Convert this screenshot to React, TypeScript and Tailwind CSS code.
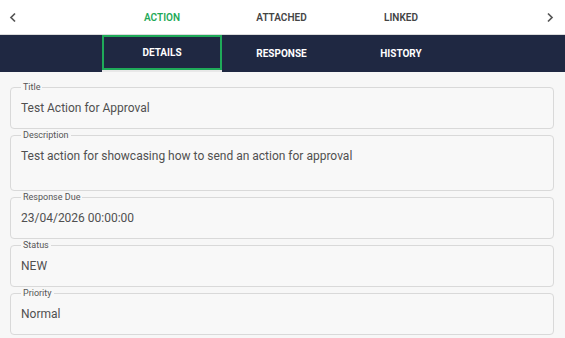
import React from "react";

function Chevron({ dir }: { dir: "left" | "right" }) {
  return (
    <svg width="8" height="11" viewBox="0 0 8 11" fill="none">
      {dir === "left" ? (
        <path d="M6 1.5 L2 5.5 L6 9.5" stroke="#555" strokeWidth="1.7" />
      ) : (
        <path d="M2 1.5 L6 5.5 L2 9.5" stroke="#555" strokeWidth="1.7" />
      )}
    </svg>
  );
}

function Field({ label, value, tall }: { label: string; value: string; tall?: boolean }) {
  return (
    <fieldset
      className={`border border-[#d9d9d9] rounded-[4px] bg-[#f8f8f8] px-[10px] ${tall ? "h-[61px]" : "h-[47px]"}`}
    >
      <legend className="px-[2px] text-[9px] leading-[11px] text-[#555]">{label}</legend>
      <div className="mt-[5px] text-[12px] leading-[20px] text-[#505050]">{value}</div>
    </fieldset>
  );
}

export default function App() {
  return (
    <div className="w-[565px] h-[338px] overflow-hidden bg-[#f7f7f7]" style={{ fontFamily: "Roboto, 'Liberation Sans', sans-serif" }}>
      <div className="h-[35px] bg-white border-b border-[#dcdcdc] flex items-center">
        <div className="w-[102px] pl-[9px] flex items-center">
          <Chevron dir="left" />
        </div>
        <div className="w-[120px] text-center text-[10px] font-semibold text-[#1faa59]">ACTION</div>
        <div className="w-[119px] text-center text-[10px] font-semibold text-[#444]">ATTACHED</div>
        <div className="w-[120px] text-center text-[10px] font-semibold text-[#444]">LINKED</div>
        <div className="flex-1 flex justify-end pr-[11px]">
          <Chevron dir="right" />
        </div>
      </div>
      <div className="h-[37px] bg-[#1f2842] flex">
        <div className="w-[102px]" />
        <div className="w-[120px] flex flex-col">
          <div className="flex-1 border-2 border-[#1faa59] flex items-center justify-center text-[10px] font-bold text-white">
            DETAILS
          </div>
          <div className="h-[2px] bg-[#e8e8e8]" />
        </div>
        <div className="w-[119px] flex items-center justify-center text-[10px] font-bold text-white">RESPONSE</div>
        <div className="w-[120px] flex items-center justify-center text-[10px] font-bold text-white">HISTORY</div>
      </div>
      <div className="pt-[10px] pl-[10px] pr-[11px] flex flex-col gap-[1px]">
        <Field label="Title" value="Test Action for Approval" />
        <Field label="Description" value="Test action for showcasing how to send an action for approval" tall />
        <Field label="Response Due" value="23/04/2026 00:00:00" />
        <Field label="Status" value="NEW" />
        <Field label="Priority" value="Normal" />
      </div>
    </div>
  );
}
